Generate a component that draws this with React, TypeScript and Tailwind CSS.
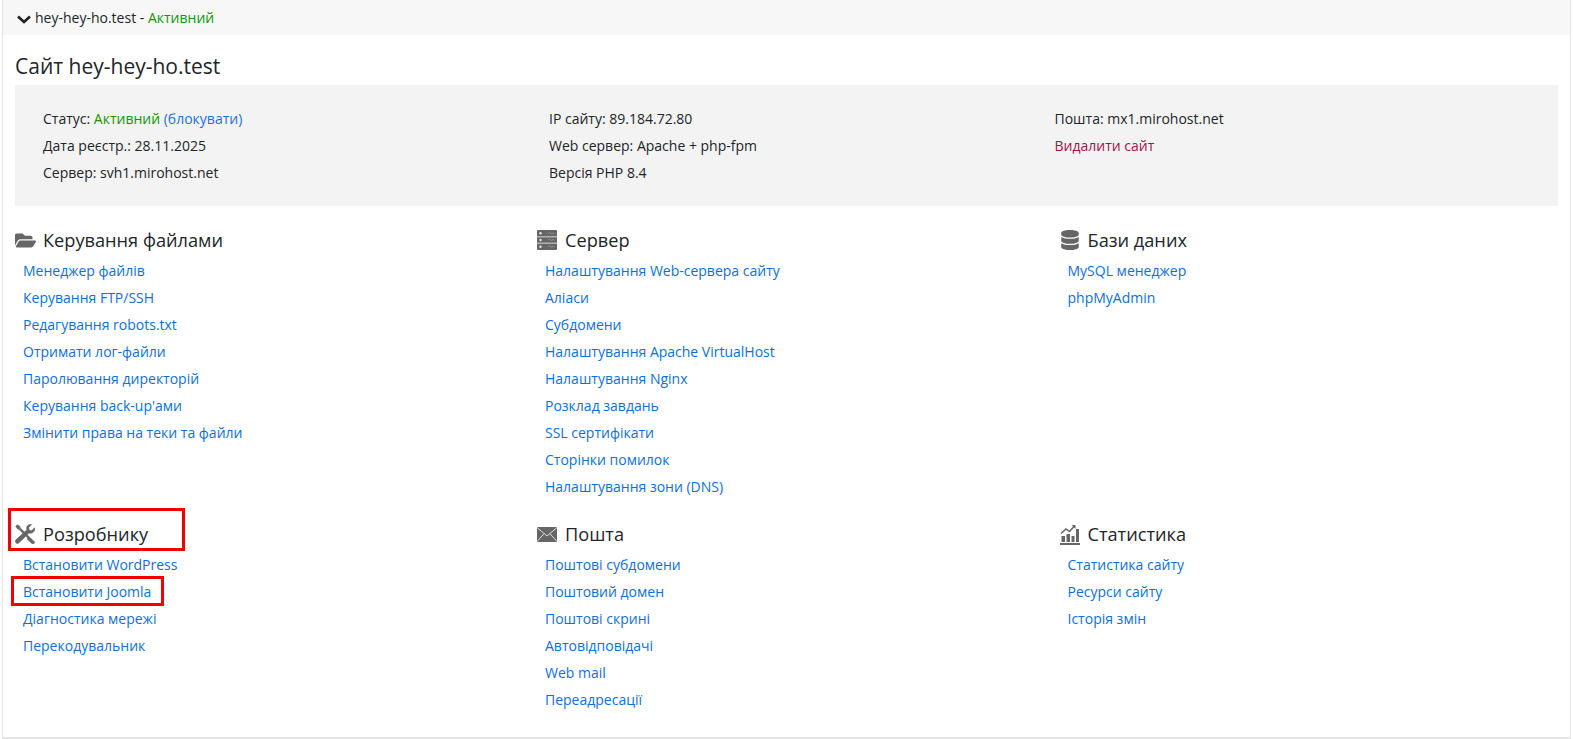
import { ReactNode } from 'react';
import { FaDatabase, FaFolderOpen } from 'react-icons/fa';

const ServerIcon = () => (
    <svg width="20" height="20" viewBox="0 0 20 20" fill="#666">
        <path d="M0 1a1 1 0 0 1 1-1h18a1 1 0 0 1 1 1v5.500H0zM0 7.200h20v5.600H0zM0 13.500h20V19a1 1 0 0 1-1 1H1a1 1 0 0 1-1-1z" />
        <circle cx="3.500" cy="3.300" r="1.200" fill="#e4e4e4" />
        <circle cx="3.500" cy="10" r="1.200" fill="#e4e4e4" />
        <circle cx="3.500" cy="16.700" r="1.200" fill="#e4e4e4" />
        <path d="M11 3.500l1.500-1 2 1.500 2-1 1 .8M11 10l1.500-1 2 1.500 2-1 1 .8M11 16.700l1.500-1 2 1.500 2-1 1 .8" fill="none" stroke="#999" strokeWidth="0.800" />
    </svg>
);

const MailIcon = () => (
    <svg width="20" height="15" viewBox="0 0 20 15">
        <rect width="20" height="15" fill="#666" />
        <path d="M0 .5 10 9 20 .5M0 14.500 7.200 6.600M20 14.500 12.800 6.600" fill="none" stroke="#ddd" strokeWidth="1" />
    </svg>
);

const StatsIcon = () => (
    <svg width="20" height="21" viewBox="0 0 20 21" fill="#666">
        <path d="M1.500 12h3.500v6H1.500zM6.500 10h3.500v8H6.500zM11.500 12h3v6h-3zM16 5h3v13h-3zM0 19h20v2H0z" />
        <path d="M1 9.500 6 5l3.500 2.500L14 2.500" fill="none" stroke="#666" strokeWidth="1.500" />
        <path d="M11.500 1H15.500V5z" />
    </svg>
);

const ToolsIcon = () => (
    <svg width="20" height="20" viewBox="0 0 20 20" fill="#666" stroke="#666" strokeWidth="0.700">
        <path d="M.8 2.200 2.200.8l2.600 1.600.5 1.500L17 15.600l-1.400 1.400L3.900 5.300l-1.500-.5z" />
        <path d="M19.600 3.800l-3 3-2.400-.7-.7-2.400 3-3c-2.400-.8-5 1-4.900 3.600 0 .6.100 1.100.3 1.600L1.200 15.600c-1 1-1 2.300-.2 3.200.9.900 2.300.8 3.200-.2l9.700-9.700c3 1.200 6.700-1.400 5.700-5.100z" />
        <path d="M13.500 13.500 18.700 17c1 .8 1 1.900.2 2.500-.7.600-1.600.5-2.300-.3l-4.500-4.300z" />
    </svg>
);

const Chevron = () => (
    <svg width="14" height="9" viewBox="0 0 14 9" fill="none" stroke="#222" strokeWidth="2.600">
        <path d="M1 1.500 7 7l6-5.500" />
    </svg>
);

const sections: { title: string; icon: ReactNode; links: string[]; }[] = [
    {
        title: 'Керування файлами',
        icon: <FaFolderOpen size={21} color="#666" />,
        links: ['Менеджер файлів', 'Керування FTP/SSH', 'Редагування robots.txt', 'Отримати лог-файли', 'Паролювання директорій', "Керування back-up'ами", 'Змінити права на теки та файли'],
    },
    {
        title: 'Сервер',
        icon: <ServerIcon />,
        links: ['Налаштування Web-сервера сайту', 'Аліаси', 'Субдомени', 'Налаштування Apache VirtualHost', 'Налаштування Nginx', 'Розклад завдань', 'SSL сертифікати', 'Сторінки помилок', 'Налаштування зони (DNS)'],
    },
    {
        title: 'Бази даних',
        icon: <FaDatabase size={20} color="#666" />,
        links: ['MySQL менеджер', 'phpMyAdmin'],
    },
    {
        title: 'Розробнику',
        icon: <ToolsIcon />,
        links: ['Встановити WordPress', 'Встановити Joomla', 'Діагностика мережі', 'Перекодувальник'],
    },
    {
        title: 'Пошта',
        icon: <MailIcon />,
        links: ['Поштові субдомени', 'Поштовий домен', 'Поштові скрині', 'Автовідповідачі', 'Web mail', 'Переадресації'],
    },
    {
        title: 'Статистика',
        icon: <StatsIcon />,
        links: ['Статистика сайту', 'Ресурси сайту', 'Історія змін'],
    },
];

export default function App() {
    return (
        <div className="relative h-[739px] w-[1569px] ml-[2px] border-x border-b-2 border-[#e5e5e5] bg-white text-[14px] leading-[27px] text-[#212529] font-['Open_Sans',sans-serif] overflow-hidden box-border">
            {/* Header */}
            <div className="flex items-center h-[35px] bg-[#f7f7f7] pl-[14px] pb-[1px]">
                <span className="mt-[5px]"><Chevron /></span>
                <span className="ml-[4px]">hey-hey-ho.test - <span className="text-[#169408]">Активний</span></span>
            </div>

            <div className="px-[12px]">
                <h1 className="text-[21px] leading-[30px] mt-[16px] mb-[4px]">Сайт hey-hey-ho.test</h1>

                {/* Info */}
                <div className="w-[1543px] h-[121px] bg-[#f3f3f3] pl-[28px] pt-[20px] grid grid-cols-[506px_505.500px_1fr]">
                    <div>
                        <div>Статус: <span className="text-[#169408]">Активний</span> <a className="text-[#2470d8]">(блокувати)</a></div>
                        <div>Дата реєстр.: 28.11.2025</div>
                        <div>Сервер: svh1.mirohost.net</div>
                    </div>
                    <div>
                        <div>IP сайту: 89.184.72.80</div>
                        <div>Web сервер: Apache + php-fpm</div>
                        <div>Версія PHP 8.4</div>
                    </div>
                    <div>
                        <div>Пошта: mx1.mirohost.net</div>
                        <div className="text-[#a5124a]">Видалити сайт</div>
                    </div>
                </div>

                {/* Sections */}
                <div className="grid grid-cols-[522px_522.500px_1fr] auto-rows-[294px] mt-[19px]">
                    {sections.map(s => (
                        <div key={s.title}>
                            <div className="flex items-center h-[30px]">
                                <span className="w-[28px] flex items-center">{s.icon}</span>
                                <h2 className="text-[18.200px] leading-[30px]">{s.title}</h2>
                            </div>
                            <ul className="pl-[8px] pt-[2px]">
                                {s.links.map(l => (
                                    <li key={l} className="text-[#0d6fdc]">{l}</li>
                                ))}
                            </ul>
                        </div>
                    ))}
                </div>
            </div>

            {/* Red annotation frames */}
            <div className="absolute left-[5px] top-[508px] w-[177px] h-[43px] border-[3px] border-[#f00000]" />
            <div className="absolute left-[8px] top-[576px] w-[153px] h-[30px] border-[3px] border-[#f00000]" />
        </div>
    );
}
